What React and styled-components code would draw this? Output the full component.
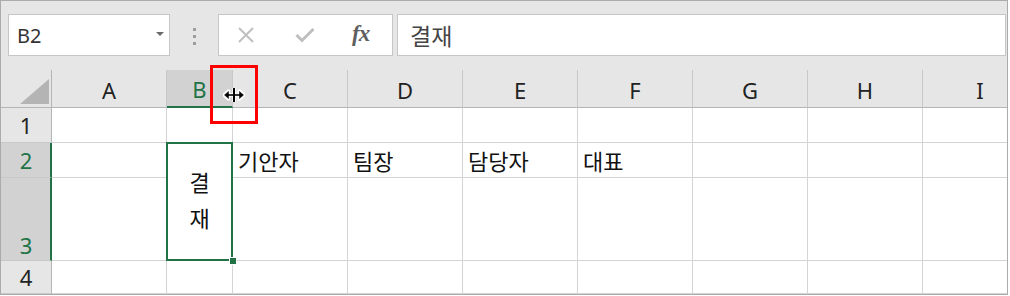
import React from "react";
import styled, { createGlobalStyle } from "styled-components";

const Global = createGlobalStyle`
  html, body { margin: 0; padding: 0; background: #ffffff; }
  body { font-family: "Noto Sans", "Noto Sans CJK KR", sans-serif; }
`;

const GREEN = "#217346";
const HEAD_BG = "#e6e6e6";
const SEL_BG = "#d2d2d2";
const GRID = "#d4d4d4";

const Frame = styled.div`
  position: relative;
  width: 1008px;
  height: 295px;
  box-sizing: border-box;
  border: 1px solid #ababab;
  overflow: hidden;
  background: #ffffff;
`;

const Toolbar = styled.div`
  height: 69px;
  box-sizing: border-box;
  background: ${HEAD_BG};
  padding: 13px 1px 0 7px;
  display: flex;
  align-items: flex-start;
`;

const NameBox = styled.div`
  width: 162px;
  height: 42px;
  box-sizing: border-box;
  background: #fff;
  border: 1px solid #c6c6c6;
  display: flex;
  align-items: center;
  justify-content: space-between;
  padding: 0 5px 0 8px;
  font-family: "Noto Sans", sans-serif;
  font-size: 20px;
  color: #333;
`;

const Caret = styled.span`
  width: 0;
  height: 0;
  border-left: 4px solid transparent;
  border-right: 4px solid transparent;
  border-top: 4px solid #6a6a6a;
  margin-top: -2px;
`;

const Grip = styled.div`
  width: 48px;
  height: 42px;
  display: flex;
  flex-direction: column;
  align-items: center;
  justify-content: center;
  gap: 4px;
  padding-top: 2px;
  box-sizing: border-box;
`;

const Dot = styled.i`
  display: block;
  width: 3px;
  height: 3px;
  background: #9d9d9d;
`;

const FxBox = styled.div`
  width: 175px;
  height: 42px;
  box-sizing: border-box;
  background: #fff;
  border: 1px solid #c6c6c6;
  display: flex;
  align-items: center;
  padding-left: 18px;
`;

const FxSlot = styled.div`
  width: 58px;
  display: flex;
  align-items: center;
`;

const FxLabel = styled.span`
  font-family: "Liberation Serif", serif;
  font-style: italic;
  font-weight: bold;
  font-size: 23px;
  color: #5f5f5f;
  letter-spacing: -1px;
  margin-left: -1px;
  margin-top: -3px;
`;

const FormulaInput = styled.div`
  flex: 1;
  margin-left: 4px;
  height: 42px;
  box-sizing: border-box;
  background: #fff;
  border: 1px solid #c6c6c6;
  display: flex;
  align-items: center;
  padding-left: 12px;
  font-family: "Noto Sans CJK KR", sans-serif;
  font-size: 23px;
  color: #444;
`;

const Sheet = styled.div`
  display: grid;
  grid-template-columns: 51px 115px 66px repeat(7, 115px);
  grid-template-rows: 38px 35px 35px 83px 33px;
`;

const Corner = styled.div`
  background: ${HEAD_BG};
  border-right: 1px solid #b5b5b5;
  border-bottom: 1px solid #b5b5b5;
  position: relative;
  &::after {
    content: "";
    position: absolute;
    left: 19px;
    top: 9px;
    width: 29px;
    height: 25px;
    background: #b4b4b4;
    clip-path: polygon(100% 0, 100% 100%, 0 100%);
  }
`;

const ColHead = styled.div`
  background: ${(p) => (p.$sel ? SEL_BG : HEAD_BG)};
  border-right: 1px solid #c8c8c8;
  border-bottom: ${(p) => (p.$sel ? `2px solid ${GREEN}` : "1px solid #b5b5b5")};
  box-sizing: border-box;
  display: flex;
  align-items: center;
  justify-content: center;
  padding-top: 2px;
  font-family: "Noto Sans", sans-serif;
  font-size: 22px;
  color: ${(p) => (p.$sel ? GREEN : "#222")};
`;

const RowHead = styled.div`
  background: ${(p) => (p.$sel ? SEL_BG : HEAD_BG)};
  border-right: ${(p) => (p.$sel ? `2px solid ${GREEN}` : "1px solid #b5b5b5")};
  border-bottom: 1px solid #c8c8c8;
  box-sizing: border-box;
  display: flex;
  align-items: ${(p) => (p.$bottom ? "flex-end" : "center")};
  justify-content: center;
  padding-bottom: ${(p) => (p.$bottom ? "4px" : "0")};
  padding-left: ${(p) => (p.$sel ? "1px" : "0")};
  font-family: "Noto Sans", sans-serif;
  font-size: 22px;
  line-height: 1;
  color: ${(p) => (p.$sel ? GREEN : "#222")};
`;

const Cell = styled.div`
  border-right: 1px solid ${GRID};
  border-bottom: 1px solid ${GRID};
  box-sizing: border-box;
  display: flex;
  align-items: center;
  padding-left: 5px;
  font-family: "Noto Sans CJK KR", sans-serif;
  font-size: 22px;
  line-height: 1;
  color: #111;
  white-space: nowrap;
`;

const MergedCell = styled(Cell)`
  grid-row: span 2;
  position: relative;
  justify-content: center;
  padding-left: 0;
  padding-bottom: 6px;
  text-align: center;
  line-height: 36px;
  white-space: pre-line;
  &::after {
    content: "";
    position: absolute;
    inset: -1px;
    border: 2px solid ${GREEN};
    pointer-events: none;
  }
`;

const FillHandle = styled.span`
  position: absolute;
  right: -5px;
  bottom: -5px;
  width: 6px;
  height: 6px;
  background: ${GREEN};
  border: 1px solid #fff;
  z-index: 2;
`;

const Callout = styled.div`
  position: absolute;
  left: 209px;
  top: 64px;
  width: 48px;
  height: 59px;
  box-sizing: border-box;
  border: 3px solid #ff0000;
  pointer-events: none;
`;

const CursorIcon = styled.svg`
  position: absolute;
  left: 222px;
  top: 85px;
`;

const COLS = ["A", "B", "C", "D", "E", "F", "G", "H", "I"];

const XIcon = () => (
  <svg width="18" height="18" viewBox="0 0 18 18">
    <path d="M2 2 L16 16 M16 2 L2 16" stroke="#bfbfbf" strokeWidth="2" fill="none" />
  </svg>
);

const CheckIcon = () => (
  <svg width="20" height="16" viewBox="0 0 20 16">
    <path d="M1.5 8 L7 13.5 L18.5 2" stroke="#bfbfbf" strokeWidth="3" fill="none" />
  </svg>
);

const ResizeCursor = () => (
  <CursorIcon width="22" height="18" viewBox="0 0 22 18">
    <g stroke="#fff" strokeWidth="3.5" fill="#fff" strokeLinejoin="round">
      <path d="M3 9 H19" />
      <path d="M1 9 L5.5 5 L5.5 13 Z" />
      <path d="M21 9 L16.5 5 L16.5 13 Z" />
      <path d="M11 2 V16" />
    </g>
    <g stroke="#000" fill="#000">
      <path d="M3 9 H19" strokeWidth="1.6" />
      <path d="M1.5 9 L5.5 5.5 L5.5 12.5 Z" strokeWidth="0.5" />
      <path d="M20.5 9 L16.5 5.5 L16.5 12.5 Z" strokeWidth="0.5" />
      <rect x="10" y="2" width="2" height="14" stroke="none" />
    </g>
  </CursorIcon>
);

const ROWS = [
  { n: "1", cells: {} },
  { n: "2", sel: true, cells: { C: "기안자", D: "팀장", E: "담당자", F: "대표" }, merged: "결\n재" },
  { n: "3", sel: true, bottom: true, cells: {}, skipB: true },
  { n: "4", cells: {} },
];

export default function App() {
  return (
    <>
      <Global />
      <Frame>
        <Toolbar>
          <NameBox>
            <span>B2</span>
            <Caret />
          </NameBox>
          <Grip>
            <Dot />
            <Dot />
            <Dot />
          </Grip>
          <FxBox>
            <FxSlot>
              <XIcon />
            </FxSlot>
            <FxSlot>
              <CheckIcon />
            </FxSlot>
            <FxLabel>fx</FxLabel>
          </FxBox>
          <FormulaInput>결재</FormulaInput>
        </Toolbar>
        <Sheet>
          <Corner />
          {COLS.map((c) => (
            <ColHead key={c} $sel={c === "B"}>
              {c}
            </ColHead>
          ))}
          {ROWS.map((r) => (
            <React.Fragment key={r.n}>
              <RowHead $sel={r.sel} $bottom={r.bottom}>
                {r.n}
              </RowHead>
              {COLS.map((c) => {
                if (c === "B" && r.skipB) return null;
                if (c === "B" && r.merged)
                  return (
                    <MergedCell key={c}>
                      {r.merged}
                      <FillHandle />
                    </MergedCell>
                  );
                return <Cell key={c}>{r.cells[c] || ""}</Cell>;
              })}
            </React.Fragment>
          ))}
        </Sheet>
        <Callout />
        <ResizeCursor />
      </Frame>
    </>
  );
}
